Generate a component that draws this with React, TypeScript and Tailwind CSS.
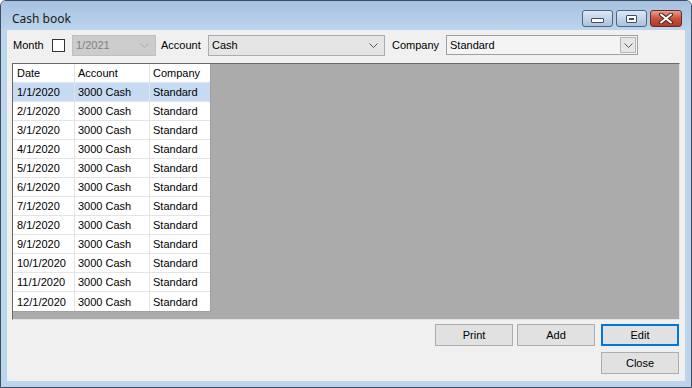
import React from 'react';

const rows = [
  '1/1/2020', '2/1/2020', '3/1/2020', '4/1/2020', '5/1/2020', '6/1/2020',
  '7/1/2020', '8/1/2020', '9/1/2020', '10/1/2020', '11/1/2020', '12/1/2020',
];

function Chevron({ color }: { color: string }) {
  return (
    <svg width="9" height="5" viewBox="0 0 9 5" className="shrink-0">
      <polyline points="0.5,0.5 4.5,4.5 8.5,0.5" fill="none" stroke={color} strokeWidth="1" />
    </svg>
  );
}

function Btn({ label, focused }: { label: string; focused?: boolean }) {
  return (
    <button
      className={
        focused
          ? 'w-[78px] h-[22px] bg-[#e1e1e1] border-2 border-[#0078d7] text-[11px] text-black'
          : 'w-[78px] h-[22px] bg-[#e1e1e1] border border-[#adadad] text-[11px] text-black'
      }
    >
      {label}
    </button>
  );
}

export default function App() {
  return (
    <div
      className="w-[692px] h-[388px] flex flex-col bg-[#bcd4ec] border border-[#3e4e62] rounded-t-[6px] overflow-hidden"
      style={{ fontFamily: '"Liberation Sans", Arial, sans-serif' }}
    >
      {/* TITLE BAR */}
      <div className="h-[29px] shrink-0 flex items-start bg-gradient-to-b from-[#a6c2e0] to-[#bcd4ec]">
        <div
          className="pl-[11px] pt-[9px] text-[12px] text-[#1a1a1a] flex-1"
          style={{ fontFamily: '"Noto Sans", "Open Sans", sans-serif' }}
        >
          Cash book
        </div>
        <div className="flex gap-[3px] mt-[9px] mr-[9px]">
          <div className="w-[31px] h-[17px] rounded-[3px] border border-[#4e6480] bg-gradient-to-b from-[#dde8f4] to-[#a9c1dd] flex items-end justify-center pb-[3px]">
            <div className="w-[13px] h-[5px] bg-white border border-[#3e4e62] rounded-[1px]" />
          </div>
          <div className="w-[31px] h-[17px] rounded-[3px] border border-[#4e6480] bg-gradient-to-b from-[#dde8f4] to-[#a9c1dd] flex items-center justify-center">
            <div className="w-[11px] h-[8px] bg-white border border-[#3e4e62] rounded-[1px] flex items-center justify-center">
              <div className="w-[5px] h-[2px] bg-[#3e4e62]" />
            </div>
          </div>
          <div className="w-[32px] h-[17px] rounded-[3px] border border-[#6a2a22] bg-gradient-to-b from-[#e7a08f] via-[#c8503c] to-[#b23a28] flex items-center justify-center">
            <svg width="14" height="11" viewBox="0 0 14 11">
              <path d="M2 1.5 L12 9.5 M12 1.5 L2 9.5" stroke="#4a2420" strokeWidth="4" strokeLinecap="round" />
              <path d="M2 1.5 L12 9.5 M12 1.5 L2 9.5" stroke="#ffffff" strokeWidth="2" strokeLinecap="round" />
            </svg>
          </div>
        </div>
      </div>

      {/* CLIENT AREA */}
      <div className="flex-1 mx-[6px] mb-[6px] bg-[#f0f0f0] flex flex-col text-[11px] text-black">
        {/* FILTER ROW */}
        <div className="flex items-center h-[21px] mt-[5px]">
          <span className="ml-[6px] w-[39px]">Month</span>
          <div className="w-[13px] h-[13px] bg-white border border-[#333333]" />
          <div className="ml-[7px] w-[84px] h-[21px] bg-[#cccccc] border border-[#bfbfbf] flex items-center justify-between pl-[3px] pr-[6px] text-[#808080]">
            <span>1/2021</span>
            <Chevron color="#a8a8a8" />
          </div>
          <span className="ml-[5px] w-[47px]">Account</span>
          <div className="w-[177px] h-[21px] bg-[#e5e5e5] border border-[#acacac] flex items-center justify-between pl-[3px] pr-[6px]">
            <span>Cash</span>
            <Chevron color="#555555" />
          </div>
          <span className="ml-[7px] w-[54px]">Company</span>
          <div className="w-[192px] h-[20px] self-start bg-[#f4f4f4] border border-[#a0a0a0] flex items-center justify-between pl-[3px] pr-[1px]">
            <span>Standard</span>
            <div className="w-[16px] h-[16px] bg-[#e6e6e6] border border-[#b4b4b4] flex items-center justify-center">
              <Chevron color="#555555" />
            </div>
          </div>
        </div>

        {/* GRID PANEL */}
        <div className="ml-[5px] mt-[7px] w-[668px] h-[257px] bg-[#ababab] border-t border-l border-[#696969] border-b border-r border-b-[#e3e3e3] border-r-[#e3e3e3]">
          <div className="w-[198px] bg-white border-r border-b border-[#a0a0a0]">
            <div className="flex h-[19px] items-center border-b border-[#e4e4e4]">
              <div className="w-[62px] pl-[4px] pt-px border-r border-[#e4e4e4] h-full flex items-center">Date</div>
              <div className="w-[75px] pl-[3px] pt-px border-r border-[#e4e4e4] h-full flex items-center">Account</div>
              <div className="flex-1 pl-[3px] pt-px h-full flex items-center">Company</div>
            </div>
            {rows.map((d, i) => (
              <div
                key={d}
                className={
                  i === 0
                    ? 'flex h-[19px] items-center bg-[#c6dbf3] border-b border-[#e4e4e4]'
                    : 'flex h-[19px] items-center border-b border-[#e4e4e4] last:border-b-0'
                }
              >
                <div className="w-[62px] pl-[4px] pt-px border-r border-[#e4e4e4] h-full flex items-center">{d}</div>
                <div className="w-[75px] pl-[3px] pt-px border-r border-[#e4e4e4] h-full flex items-center">3000 Cash</div>
                <div className="flex-1 pl-[3px] pt-px h-full flex items-center">Standard</div>
              </div>
            ))}
          </div>
        </div>

        {/* BUTTONS */}
        <div className="flex justify-end mt-[4px] mr-[6px]">
          <Btn label="Print" />
          <div className="w-[4px]" />
          <Btn label="Add" />
          <div className="w-[6px]" />
          <Btn label="Edit" focused />
        </div>
        <div className="flex justify-end mt-[6px] mr-[6px]">
          <Btn label="Close" />
        </div>
      </div>
    </div>
  );
}
